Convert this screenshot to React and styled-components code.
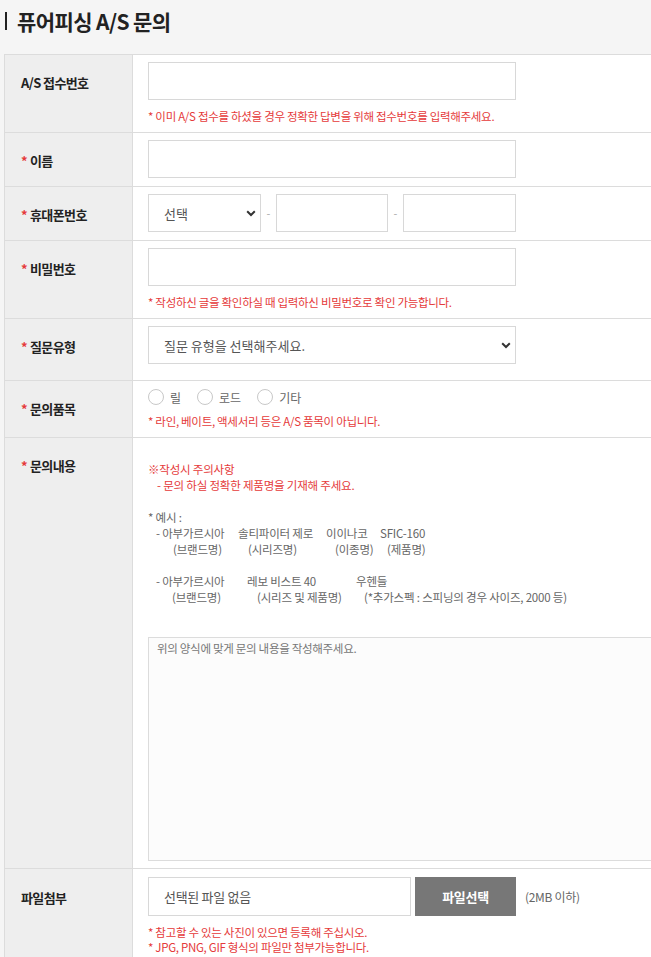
import React from 'react';
import styled, { createGlobalStyle } from 'styled-components';

const GlobalStyle = createGlobalStyle`
  html, body {
    margin: 0;
    padding: 0;
    overflow: hidden;
    background: #f5f5f5;
  }
  body {
    font-family: "Noto Sans CJK KR", "Noto Sans", sans-serif;
    color: #333;
  }
  * { box-sizing: border-box; }
`;

const Page = styled.div`
  width: 820px;
  padding: 12px 0 0 4px;
`;

const Title = styled.h1`
  margin: 0 0 24px 1px;
  padding-left: 10px;
  border-left: 2px solid #222;
  font-size: 21px;
  line-height: 18px;
  font-weight: 700;
  color: #222;
  letter-spacing: -0.6px;
`;

const FormTable = styled.div`
  border-top: 1px solid #dcdcdc;
  border-left: 1px solid #dcdcdc;
  background: #fff;
`;

const Row = styled.div`
  display: flex;
  border-bottom: 1px solid #dcdcdc;
`;

const Label = styled.div`
  flex: 0 0 128px;
  background: #eee;
  border-right: 1px solid #dcdcdc;
  padding: ${p => p.$pt || 9}px 0 6px 16px;
  font-size: 13px;
  font-weight: 700;
  line-height: 38px;
  color: #222;
  letter-spacing: -0.6px;
  white-space: nowrap;
`;

const Req = styled.span`
  color: #e53a3a;
  margin-right: 3px;
`;

const Field = styled.div`
  flex: 1;
  padding: ${p => p.$pt || 7}px 15px ${p => p.$pb || 8}px;
`;

const TextInput = styled.input`
  display: block;
  width: ${p => p.$w || 368}px;
  height: 38px;
  border: 1px solid #d8d8d8;
  background: #fff;
  padding: 0 15px;
  font-family: inherit;
  font-size: 13px;
  color: #555;
  outline: none;
`;

const Note = styled.div`
  margin-top: ${p => p.$mt || 8}px;
  font-size: 11.5px;
  line-height: ${p => p.$lh || 16}px;
  color: #e53a3a;
  letter-spacing: -0.3px;
`;

const PhoneGroup = styled.div`
  display: flex;
  align-items: center;
`;

const Dash = styled.span`
  width: 15px;
  text-align: center;
  font-size: 11px;
  color: #aaa;
`;

const SelectWrap = styled.div`
  position: relative;
  width: ${p => p.$w || 368}px;
  height: 38px;
`;

const Select = styled.select`
  appearance: none;
  width: 100%;
  height: 100%;
  border: 1px solid #d8d8d8;
  background: #fff;
  padding: 0 15px;
  font-family: inherit;
  font-size: 13px;
  color: #555;
  outline: none;
`;

const Chevron = styled.svg`
  position: absolute;
  right: 5px;
  top: 16px;
  pointer-events: none;
`;

const RadioGroup = styled.div`
  display: flex;
  align-items: center;
  height: 18px;
`;

const RadioItem = styled.label`
  display: flex;
  align-items: center;
  gap: 6px;
  margin-right: 16px;
  font-size: 12px;
  color: #666;
`;

const Radio = styled.input`
  appearance: none;
  width: 16px;
  height: 16px;
  margin: 0;
  border: 1px solid #c8c8c8;
  border-radius: 50%;
  background: #fff;
`;

const Guide = styled.div`
  margin-top: 16px;
  font-size: 11.5px;
  line-height: 16px;
  letter-spacing: -0.2px;
  color: #666;
`;

const GuideLine = styled.div`
  min-height: 16px;
  padding-left: ${p => p.$indent || 0}px;
  color: ${p => (p.$red ? '#e53a3a' : '#666')};
  white-space: nowrap;
`;

const ExampleGrid = styled.div`
  display: grid;
  grid-template-columns: ${p => p.$cols};
  margin-left: 8px;
  white-space: nowrap;
`;

const Caption = styled.div`
  padding-left: ${p => p.$indent}px;
`;

const TextArea = styled.textarea`
  display: block;
  width: 640px;
  height: 224px;
  margin-top: 32px;
  border: 1px solid #dcdcdc;
  background: #fcfcfc;
  padding: 2px 8px;
  font-family: inherit;
  font-size: 11.5px;
  line-height: 16px;
  letter-spacing: -0.3px;
  resize: none;
  outline: none;
  &::placeholder { color: #777; }
`;

const FileRow = styled.div`
  display: flex;
  align-items: center;
`;

const FileBox = styled.div`
  width: 263px;
  height: 39px;
  border: 1px solid #d8d8d8;
  padding: 0 15px;
  font-size: 13px;
  line-height: 37px;
  color: #555;
  letter-spacing: -0.3px;
`;

const FileButton = styled.button`
  width: 101px;
  height: 39px;
  margin-left: 4px;
  border: none;
  background: #777;
  color: #fff;
  font-family: inherit;
  font-size: 13px;
  font-weight: 700;
  letter-spacing: -0.3px;
`;

const SizeHint = styled.span`
  margin-left: 9px;
  font-size: 12px;
  color: #666;
  letter-spacing: -0.3px;
`;

const ChevronIcon = () => (
  <Chevron width="10" height="7" viewBox="0 0 10 7">
    <path d="M1.2 1.3 L5 5 L8.8 1.3" fill="none" stroke="#333" strokeWidth="2" />
  </Chevron>
);

const examples = [
  {
    cols: '82px 88px 54px auto',
    items: [
      ['- 아부가르시아', '(브랜드명)', 17],
      ['솔티파이터 제로', '(시리즈명)', 10],
      ['이이나코', '(이종명)', 9],
      ['SFIC-160', '(제품명)', 7],
    ],
  },
  {
    cols: '91px 109px auto',
    items: [
      ['- 아부가르시아', '(브랜드명)', 16],
      ['레보 비스트  40', '(시리즈 및 제품명)', 10],
      ['우헨들', '(*추가스펙 : 스피닝의 경우 사이즈,  2000 등)', 8],
    ],
  },
];

const Example = ({ cols, items }) => (
  <ExampleGrid $cols={cols}>
    {items.map(([name, caption, indent]) => (
      <div key={name}>
        <div>{name}</div>
        <Caption $indent={indent}>{caption}</Caption>
      </div>
    ))}
  </ExampleGrid>
);

const App = () => {
  return (
    <>
      <GlobalStyle />
      <Page>
        <Title>퓨어피싱 A/S 문의</Title>
        <FormTable>
          <Row>
            <Label>A/S 접수번호</Label>
            <Field>
              <TextInput type="text" />
              <Note>* 이미 A/S 접수를 하셨을 경우 정확한 답변을 위해 접수번호를 입력해주세요.</Note>
            </Field>
          </Row>
          <Row>
            <Label><Req>*</Req>이름</Label>
            <Field>
              <TextInput type="text" />
            </Field>
          </Row>
          <Row>
            <Label><Req>*</Req>휴대폰번호</Label>
            <Field>
              <PhoneGroup>
                <SelectWrap $w={113}>
                  <Select defaultValue="">
                    <option value="">선택</option>
                    <option>010</option>
                    <option>011</option>
                  </Select>
                  <ChevronIcon />
                </SelectWrap>
                <Dash>-</Dash>
                <TextInput type="text" $w={112} />
                <Dash>-</Dash>
                <TextInput type="text" $w={113} />
              </PhoneGroup>
            </Field>
          </Row>
          <Row>
            <Label><Req>*</Req>비밀번호</Label>
            <Field>
              <TextInput type="password" />
              <Note>* 작성하신 글을 확인하실 때 입력하신 비밀번호로 확인 가능합니다.</Note>
            </Field>
          </Row>
          <Row>
            <Label><Req>*</Req>질문유형</Label>
            <Field $pb={16}>
              <SelectWrap>
                <Select defaultValue="">
                  <option value="">질문 유형을 선택해주세요.</option>
                </Select>
                <ChevronIcon />
              </SelectWrap>
            </Field>
          </Row>
          <Row>
            <Label><Req>*</Req>문의품목</Label>
            <Field>
              <RadioGroup>
                <RadioItem><Radio type="radio" name="item" />릴</RadioItem>
                <RadioItem><Radio type="radio" name="item" />로드</RadioItem>
                <RadioItem><Radio type="radio" name="item" />기타</RadioItem>
              </RadioGroup>
              <Note $mt={7}>* 라인, 베이트, 액세서리 등은 A/S 품목이 아닙니다.</Note>
            </Field>
          </Row>
          <Row>
            <Label><Req>*</Req>문의내용</Label>
            <Field $pb={7}>
              <Guide>
                <GuideLine $red>※작성시 주의사항</GuideLine>
                <GuideLine $red $indent={9}>- 문의 하실 정확한 제품명을 기재해 주세요.</GuideLine>
                <GuideLine />
                <GuideLine>* 예시 :</GuideLine>
                <Example {...examples[0]} />
                <GuideLine />
                <Example {...examples[1]} />
              </Guide>
              <TextArea placeholder="위의 양식에 맞게 문의 내용을 작성해주세요." />
            </Field>
          </Row>
          <Row>
            <Label $pt={10}>파일첨부</Label>
            <Field $pt={8}>
              <FileRow>
                <FileBox>선택된 파일 없음</FileBox>
                <FileButton type="button">파일선택</FileButton>
                <SizeHint>(2MB 이하)</SizeHint>
              </FileRow>
              <Note $mt={9} $lh={15}>
                * 참고할 수 있는 사진이 있으면 등록해 주십시오.
                <br />
                * JPG, PNG, GIF 형식의 파일만 첨부가능합니다.
              </Note>
            </Field>
          </Row>
        </FormTable>
      </Page>
    </>
  );
};

export default App;
